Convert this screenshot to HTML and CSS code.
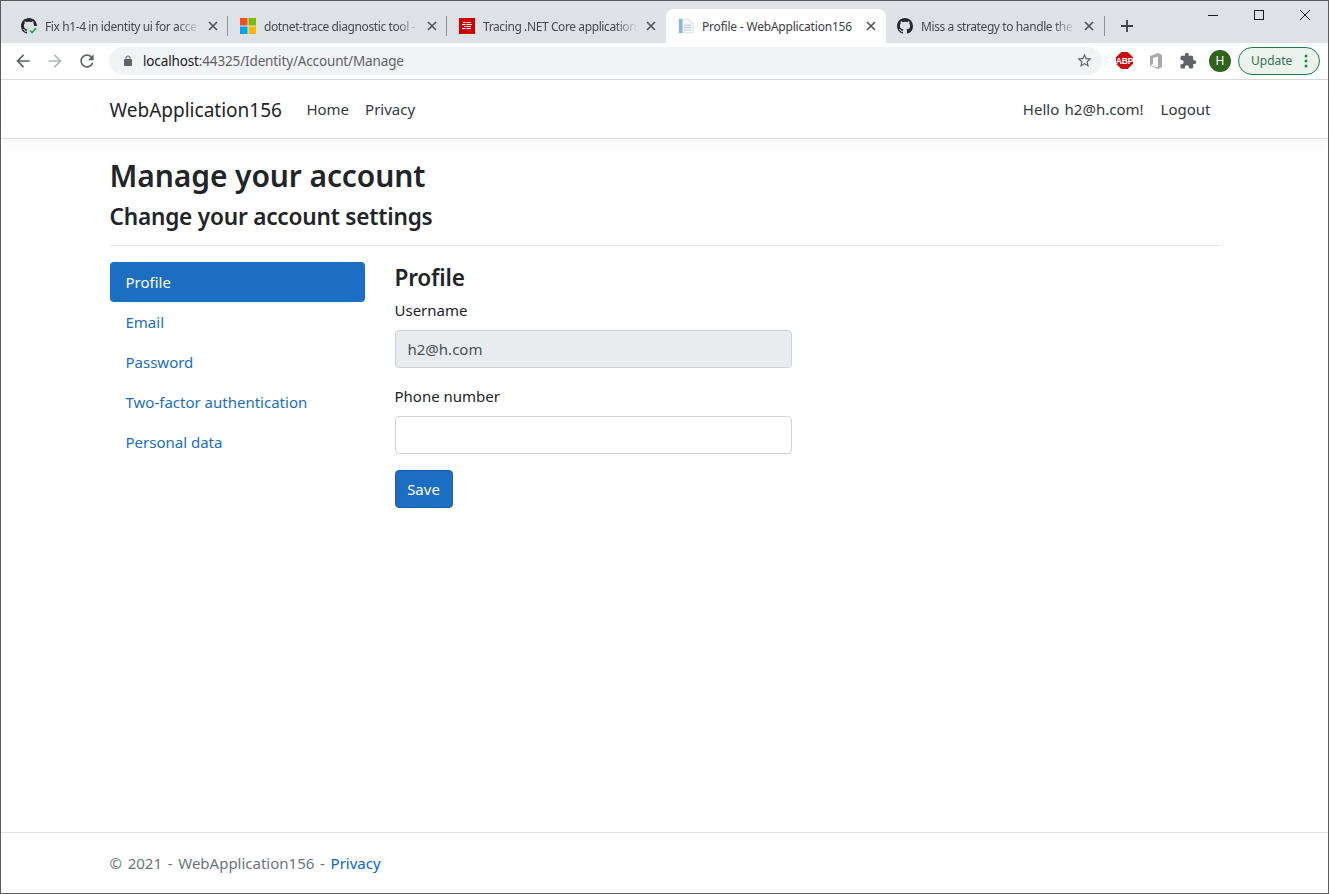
FILE: index.html
```html
<!DOCTYPE html>
<html lang="en">
<head>
<meta charset="utf-8">
<title>Profile - WebApplication156</title>
<link rel="stylesheet" href="styles.css">
</head>
<body>
<div class="window">
  <div class="tabstrip">
    <div class="tab">
      <svg class="favicon" viewBox="0 0 16 16"><path fill="#24292e" d="M8 0C3.58 0 0 3.58 0 8c0 3.54 2.29 6.53 5.47 7.59.4.07.55-.17.55-.38 0-.19-.01-.82-.01-1.49-2.01.37-2.53-.49-2.69-.94-.09-.23-.48-.94-.82-1.13-.28-.15-.68-.52-.01-.53.63-.01 1.08.58 1.23.82.72 1.21 1.87.87 2.33.66.07-.52.28-.87.51-1.07-1.78-.2-3.64-.89-3.64-3.95 0-.87.31-1.59.82-2.15-.08-.2-.36-1.02.08-2.12 0 0 .67-.21 2.2.82.64-.18 1.32-.27 2-.27.68 0 1.36.09 2 .27 1.53-1.04 2.2-.82 2.2-.82.44 1.1.16 1.92.08 2.12.51.56.82 1.27.82 2.15 0 3.07-1.87 3.75-3.65 3.95.29.25.54.73.54 1.48 0 1.07-.01 1.93-.01 2.2 0 .21.15.46.55.38A8.013 8.013 0 0016 8c0-4.42-3.58-8-8-8z"/><rect x="8" y="8" width="8" height="8" fill="#dee1e6"/><path d="M9 12.5l2 2 4-4.5" fill="none" stroke="#28a745" stroke-width="1.6"/></svg>
      <span class="tab-title">Fix h1-4 in identity ui for acce</span>
      <svg class="tab-close" viewBox="0 0 10 10"><path d="M1 1l8 8M9 1l-8 8"/></svg>
    </div>
    <div class="tab">
      <svg class="favicon" viewBox="0 0 16 16"><rect width="7.5" height="7.5" fill="#f25022"/><rect x="8.5" width="7.5" height="7.5" fill="#7fba00"/><rect y="8.5" width="7.5" height="7.5" fill="#00a4ef"/><rect x="8.5" y="8.5" width="7.5" height="7.5" fill="#ffb900"/></svg>
      <span class="tab-title">dotnet-trace diagnostic tool -</span>
      <svg class="tab-close" viewBox="0 0 10 10"><path d="M1 1l8 8M9 1l-8 8"/></svg>
    </div>
    <div class="tab">
      <svg class="favicon" viewBox="0 0 16 16"><rect width="16" height="16" fill="#cc0000"/><path d="M4 4.500h8M3 6.500h10M5 8.500h7M3 10.500h9" stroke="#fff" stroke-width="1"/><path d="M7 4v8" stroke="#cc0000" stroke-width=".8"/></svg>
      <span class="tab-title">Tracing .NET Core application</span>
      <svg class="tab-close" viewBox="0 0 10 10"><path d="M1 1l8 8M9 1l-8 8"/></svg>
    </div>
    <div class="tab tab-active">
      <svg class="favicon" viewBox="0 0 16 16"><path d="M1 1h10l4 4v10H1z" fill="#f2f5f9" stroke="#d5dce5" stroke-width=".8"/><rect x="1" y="1" width="3.500" height="14" fill="#8ab6dd"/><path d="M6 7h7M6 9.500h7M6 12h7" stroke="#c9d2dc"/></svg>
      <span class="tab-title">Profile - WebApplication156</span>
      <svg class="tab-close" viewBox="0 0 10 10"><path d="M1 1l8 8M9 1l-8 8"/></svg>
    </div>
    <div class="tab tab-last">
      <svg class="favicon" viewBox="0 0 16 16"><path fill="#24292e" d="M8 0C3.58 0 0 3.58 0 8c0 3.54 2.29 6.53 5.47 7.59.4.07.55-.17.55-.38 0-.19-.01-.82-.01-1.49-2.01.37-2.53-.49-2.69-.94-.09-.23-.48-.94-.82-1.13-.28-.15-.68-.52-.01-.53.63-.01 1.08.58 1.23.82.72 1.21 1.87.87 2.33.66.07-.52.28-.87.51-1.07-1.78-.2-3.64-.89-3.64-3.95 0-.87.31-1.59.82-2.15-.08-.2-.36-1.02.08-2.12 0 0 .67-.21 2.2.82.64-.18 1.32-.27 2-.27.68 0 1.36.09 2 .27 1.53-1.04 2.2-.82 2.2-.82.44 1.1.16 1.92.08 2.12.51.56.82 1.27.82 2.15 0 3.07-1.87 3.75-3.65 3.95.29.25.54.73.54 1.48 0 1.07-.01 1.93-.01 2.2 0 .21.15.46.55.38A8.013 8.013 0 0016 8c0-4.42-3.58-8-8-8z"/></svg>
      <span class="tab-title">Miss a strategy to handle the</span>
      <svg class="tab-close" viewBox="0 0 10 10"><path d="M1 1l8 8M9 1l-8 8"/></svg>
    </div>
    <svg class="newtab" viewBox="0 0 12 12"><path d="M6 0v12M0 6h12"/></svg>
    <div class="caption">
      <svg class="cap" viewBox="0 0 46 30"><path d="M18 14.500h10"/></svg>
      <svg class="cap" viewBox="0 0 46 30"><rect x="18.500" y="9.500" width="9" height="9"/></svg>
      <svg class="cap" viewBox="0 0 46 30"><path d="M18 9l10 10M28 9L18 19"/></svg>
    </div>
  </div>
  <div class="toolbar">
    <svg class="navicon" viewBox="0 0 24 24"><path fill="#5f6368" d="M20 11H7.830l5.590-5.590L12 4l-8 8 8 8 1.410-1.410L7.830 13H20v-2z"/></svg>
    <svg class="navicon" viewBox="0 0 24 24"><path fill="#b4b7ba" d="M4 11h12.170l-5.590-5.590L12 4l8 8-8 8-1.410-1.410L16.170 13H4v-2z"/></svg>
    <svg class="navicon" viewBox="0 0 24 24"><path fill="#5f6368" d="M17.650 6.350C16.200 4.900 14.210 4 12 4c-4.420 0-7.990 3.580-7.990 8s3.570 8 7.990 8c3.730 0 6.840-2.550 7.730-6h-2.080c-.82 2.330-3.040 4-5.650 4-3.310 0-6-2.690-6-6s2.690-6 6-6c1.660 0 3.140.690 4.220 1.780L13 11h7V4l-2.350 2.350z"/></svg>
    <div class="omnibox">
      <svg class="lock" viewBox="0 0 24 24"><path fill="#5f6368" d="M18 8h-1V6c0-2.760-2.240-5-5-5S7 3.240 7 6v2H6c-1.100 0-2 .9-2 2v10c0 1.100.9 2 2 2h12c1.100 0 2-.9 2-2V10c0-1.100-.9-2-2-2zM9 6c0-1.660 1.340-3 3-3s3 1.340 3 3v2H9V6z"/></svg>
      <span class="url"><span class="url-host">localhost</span>:44325/Identity/Account/Manage</span>
      <svg class="star" viewBox="0 0 24 24"><path fill="#5f6368" d="M22 9.240l-7.190-.62L12 2 9.190 8.630 2 9.240l5.460 4.730L5.820 21 12 17.270 18.180 21l-1.630-7.030L22 9.240zM12 15.400l-3.760 2.270 1-4.280-3.320-2.880 4.380-.38L12 6.100l1.710 4.040 4.380.38-3.320 2.880 1 4.280L12 15.400z"/></svg>
    </div>
    <svg class="ext ext-abp" viewBox="0 0 16 16"><path fill="#c70d0d" d="M5 0h6l5 5v6l-5 5H5l-5-5V5z"/><text x="8" y="11" text-anchor="middle" class="abp-text">ABP</text></svg>
    <svg class="ext ext-office" viewBox="0 0 16 16"><path fill="#a9abae" d="M2 3l8-3 4 2v12l-4 2-8-3 8 1V3.500L5 5v6l-3 2z"/></svg>
    <svg class="ext ext-puzzle" viewBox="0 0 24 24"><path fill="#5f6368" d="M20.500 11H19V7c0-1.100-.9-2-2-2h-4V3.500C13 2.120 11.880 1 10.500 1S8 2.120 8 3.500V5H4c-1.100 0-1.990.9-1.990 2v3.800H3.500c1.490 0 2.700 1.210 2.700 2.700s-1.210 2.700-2.700 2.700H2V20c0 1.100.9 2 2 2h3.800v-1.500c0-1.490 1.210-2.700 2.700-2.700 1.490 0 2.700 1.210 2.700 2.700V22H17c1.100 0 2-.9 2-2v-4h1.500c1.380 0 2.500-1.120 2.500-2.500S21.880 11 20.500 11z"/></svg>
    <div class="avatar">H</div>
    <div class="update">
      <span class="update-text">Update</span>
      <svg class="dots" viewBox="0 0 4 14"><circle cx="2" cy="2" r="1.500"/><circle cx="2" cy="7" r="1.500"/><circle cx="2" cy="12" r="1.500"/></svg>
    </div>
  </div>
  <div class="page">
    <header class="navbar">
      <div class="container nav-row">
        <a class="brand">WebApplication156</a>
        <a class="nav-link">Home</a>
        <a class="nav-link">Privacy</a>
        <span class="nav-spacer"></span>
        <a class="nav-link nav-user">Hello h2@h.com!</a>
        <a class="nav-link">Logout</a>
      </div>
    </header>
    <main class="container main">
      <h1 class="title">Manage your account</h1>
      <h2 class="subtitle">Change your account settings</h2>
      <hr class="rule">
      <div class="columns">
        <nav class="side">
          <a class="pill pill-active">Profile</a>
          <a class="pill">Email</a>
          <a class="pill">Password</a>
          <a class="pill">Two-factor authentication</a>
          <a class="pill">Personal data</a>
        </nav>
        <section class="form">
          <h4 class="form-title">Profile</h4>
          <div class="field">
            <label class="label">Username</label>
            <div class="input input-disabled">h2@h.com</div>
          </div>
          <div class="field">
            <label class="label">Phone number</label>
            <div class="input"></div>
          </div>
          <button class="save">Save</button>
        </section>
      </div>
    </main>
    <footer class="footer">
      <div class="container">© 2021 - WebApplication156 - <a class="footer-link">Privacy</a></div>
    </footer>
  </div>
</div>
</body>
</html>
```
FILE: styles.css
```css
* { box-sizing: border-box; }
html, body { margin: 0; height: 100%; }
body { font-family: "Noto Sans", "Open Sans", sans-serif; font-size: 15px; color: #212529; background: #fff; overflow: hidden; }
.window { height: 894px; display: flex; flex-direction: column; border: 1px solid #5c5c5c; }

.tabstrip { height: 42px; flex: none; background: #dee1e6; display: flex; align-items: flex-end; padding-left: 8px; }
.tab { width: 219px; height: 34px; flex: none; display: flex; align-items: center; padding: 0 10px 0 12px; position: relative; color: #45494d; font-size: 12px; }
.tab::after { content: ""; position: absolute; right: 0; top: 7px; height: 20px; width: 1px; background: #8e9196; }
.tab:nth-child(3)::after, .tab-active::after { display: none; }
.tab-active { background: #fff; border-radius: 8px 8px 0 0; color: #3c4043; width: 220px; }
.tab-last { padding: 0 11px; }
.favicon { width: 16px; height: 16px; flex: none; margin-right: 8px; }
.tab-title { flex: 1; white-space: nowrap; overflow: hidden; letter-spacing: -.4px; -webkit-mask-image: linear-gradient(to right, #000 85%, transparent 100%); mask-image: linear-gradient(to right, #000 85%, transparent 100%); }
.tab-active .tab-title { letter-spacing: -.2px; mask-image: none; -webkit-mask-image: none; }
.tab-close { width: 10px; height: 10px; flex: none; margin-left: 8px; }
.tab-close path { stroke: #4f5256; stroke-width: 1.6; fill: none; }
.newtab { width: 12px; height: 12px; margin: 0 0 11px 16px; flex: none; }
.newtab path { stroke: #3c4043; stroke-width: 1.800; fill: none; }
.caption { margin-left: auto; align-self: flex-start; display: flex; }
.cap { width: 46px; height: 30px; flex: none; fill: none; stroke: #1a1a1a; stroke-width: 1; }

.toolbar { height: 37px; flex: none; background: #fff; border-bottom: 1px solid #dadce0; display: flex; align-items: center; padding: 0 9px 1px 12px; }
.navicon { width: 20px; height: 20px; flex: none; margin-right: 12px; }
.omnibox { width: 993px; height: 28px; margin-left: 0; background: #f1f3f4; border-radius: 14px; display: flex; align-items: center; padding: 0 9px 0 13px; flex: none; }
.lock { width: 12px; height: 12px; flex: none; margin-right: 9px; }
.url { flex: 1; font-size: 13.500px; color: #5f6368; letter-spacing: -.14px; white-space: nowrap; }
.url-host { color: #202124; }
.star { width: 17px; height: 17px; flex: none; }
.ext { flex: none; }
.ext-abp { width: 17px; height: 17px; margin-left: 14px; }
.abp-text { font-family: "Liberation Sans", sans-serif; font-size: 8px; font-weight: 700; letter-spacing: -.2px; fill: #fff; }
.ext-office { width: 16px; height: 16px; margin-left: 15px; }
.ext-puzzle { width: 18px; height: 18px; margin-left: 15px; }
.avatar { width: 22px; height: 22px; margin-left: 12px; flex: none; border-radius: 50%; background: #2f6319; color: #fff; font-size: 12px; display: flex; align-items: center; justify-content: center; }
.update { width: 82px; height: 28px; margin-left: 7px; flex: none; border: 1px solid #1e7e45; border-radius: 14px; background: #eaf3ed; display: flex; align-items: center; padding: 0 11px 0 12px; }
.update-text { flex: 1; font-size: 12px; color: #3c6e52; }
.dots { width: 4px; height: 14px; flex: none; fill: #1e8e3e; }

.page { flex: 1; display: flex; flex-direction: column; min-height: 0; }
.container { width: 1140px; margin: 0 auto; padding: 0 15px; }
.navbar { height: 59px; flex: none; background: #fff; border-bottom: 1px solid #dee2e6; box-shadow: 0 4px 12px rgba(0, 0, 0, .05); display: flex; align-items: center; }
.nav-row { display: flex; align-items: center; line-height: 24px; padding-right: 16px; }
.brand { font-size: 19px; line-height: 30px; padding-top: 1px; margin-right: 16.500px; color: #212529; }
.nav-link { padding: 8px; color: #343a40; }
.nav-user { margin-right: 1px; word-spacing: 1.500px; }
.nav-spacer { flex: 1; }

.main { flex: 1; display: flex; flex-direction: column; }
.title { font-size: 30px; font-weight: 600; letter-spacing: -.1px; line-height: 38px; margin: 18px 0 9px; }
.subtitle { font-size: 22.600px; font-weight: 600; letter-spacing: -.2px; line-height: 26px; margin: 0; }
.rule { width: 100%; border: 0; border-top: 1px solid #dfe1e3; margin: 15px 0 16px; }
.columns { display: flex; gap: 30px; }
.side { width: 255px; flex: none; display: flex; flex-direction: column; }
.pill { height: 40px; padding: 8px 16px; line-height: 24px; color: #1b6ec2; border-radius: 4px; }
.pill-active { background: #1b6ec2; color: #fff; }
.form { width: 397px; flex: none; }
.form-title { font-size: 22.600px; font-weight: 600; letter-spacing: -.2px; line-height: 29px; margin: 1px 0 6px; }
.field { margin-bottom: 16px; }
.label { display: block; line-height: 24px; margin-bottom: 8px; }
.input { height: 38px; border: 1px solid #ced4da; border-radius: 4px; padding: 6px 12px; line-height: 24px; color: #495057; background: #fff; }
.input-disabled { background: #e9ecef; }
.save { display: block; width: 58px; height: 38px; padding: 6px 0; font: inherit; line-height: 24px; color: #fff; background: #1b6ec2; border: 1px solid #1861ac; border-radius: 4px; }

.footer { height: 61px; flex: none; border-top: 1px solid #dee2e6; color: #6c757d; display: flex; align-items: center; word-spacing: 1.800px; }
.footer-link { color: #0366d6; }
```
